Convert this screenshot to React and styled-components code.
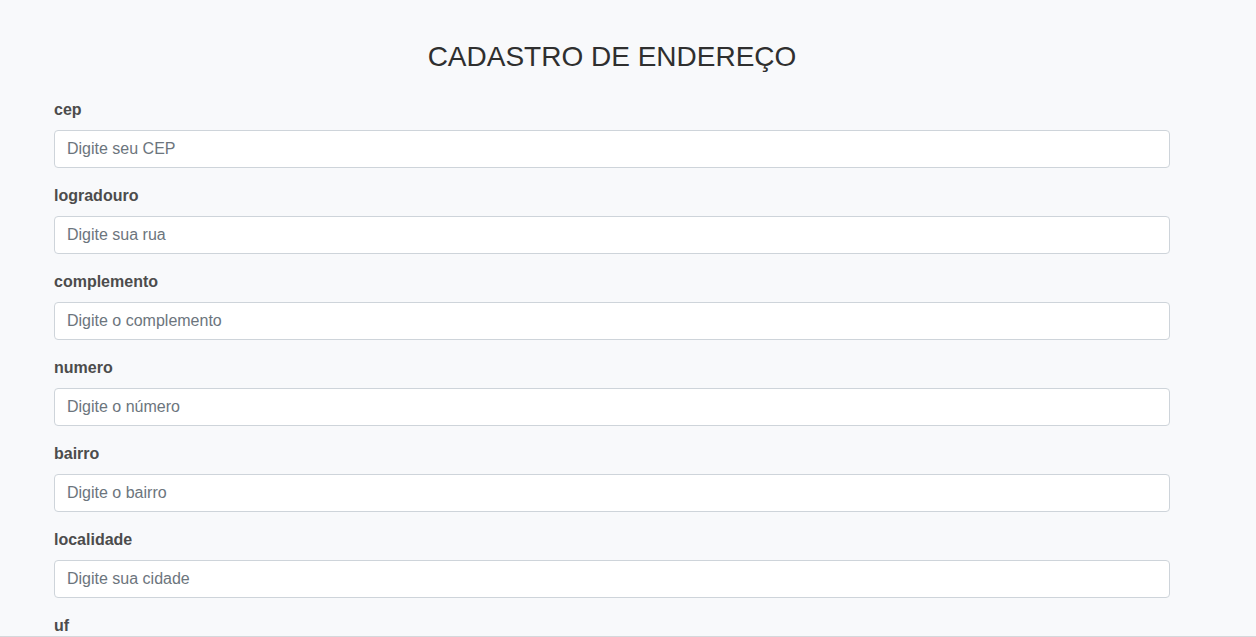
import React from "react";
import styled, { createGlobalStyle } from "styled-components";

const GlobalStyle = createGlobalStyle`
  *, *::before, *::after { box-sizing: border-box; }
  body {
    margin: 0;
    background: #f8f9fb;
    color: #4c4c4c;
    font-family: "Liberation Sans", Arial, sans-serif;
    font-size: 16px;
    line-height: 24px;
  }
`;

const Page = styled.main`
  height: 100vh;
  padding: 40px 86px 40px 54px;
  overflow-y: auto;
  scrollbar-width: none;
  border-bottom: 1px solid #d5d8db;
`;

const Title = styled.h1`
  margin: 0 0 24px;
  color: #2f2f2f;
  font-size: 28px;
  font-weight: 400;
  line-height: 34px;
  text-align: center;
`;

const Form = styled.form`
  display: flex;
  flex-direction: column;
  gap: 16px;
`;

const Field = styled.div`
  display: flex;
  flex-direction: column;
  gap: 8px;
`;

const Label = styled.label`
  font-weight: 700;
`;

const Input = styled.input`
  width: 100%;
  height: 38px;
  padding: 6px 12px;
  border: 1px solid #ced4da;
  border-radius: 4px;
  background: #fff;
  color: #495057;
  font: inherit;

  &::placeholder {
    color: #6c757d;
    opacity: 1;
  }

  &:focus {
    border-color: #80bdff;
    outline: none;
  }
`;

const fields = [
  { name: "cep", placeholder: "Digite seu CEP" },
  { name: "logradouro", placeholder: "Digite sua rua" },
  { name: "complemento", placeholder: "Digite o complemento" },
  { name: "numero", placeholder: "Digite o número" },
  { name: "bairro", placeholder: "Digite o bairro" },
  { name: "localidade", placeholder: "Digite sua cidade" },
  { name: "uf" },
];

export default function App() {
  return (
    <>
      <GlobalStyle />
      <Page>
        <Title>CADASTRO DE ENDEREÇO</Title>
        <Form>
          {fields.map(({ name, placeholder }) => (
            <Field key={name}>
              <Label htmlFor={name}>{name}</Label>
              <Input id={name} name={name} type="text" placeholder={placeholder} />
            </Field>
          ))}
        </Form>
      </Page>
    </>
  );
}
